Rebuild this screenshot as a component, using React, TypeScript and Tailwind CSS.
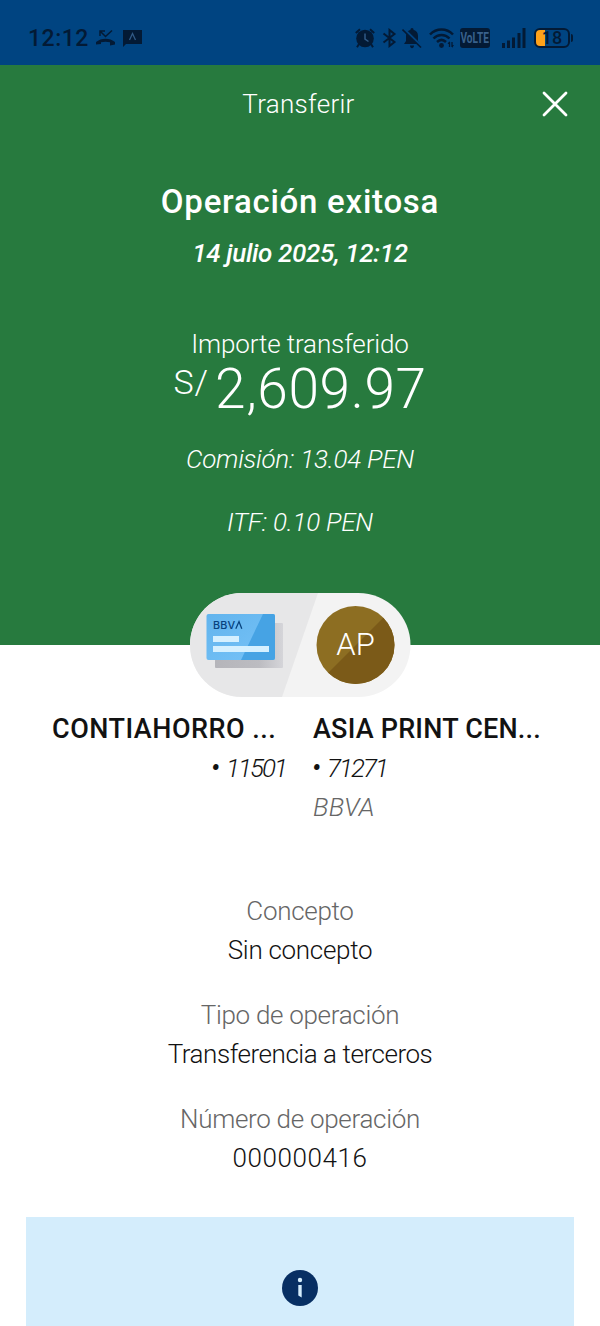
import type { ReactNode } from "react";

const details = [
  { label: "Concepto", value: "Sin concepto", valueClass: "tracking-[-0.3px]" },
  { label: "Tipo de operación", value: "Transferencia a terceros", valueClass: "tracking-[-0.45px]" },
  { label: "Número de operación", value: "000000416", valueClass: "tracking-[0.6px]" },
];

const StatusBar = () => (
  <div className="flex h-[65px] items-center bg-[#004481] px-7 pt-[11px] text-[#031a35]">
    <span className="w-[62px] whitespace-nowrap text-[23px] font-medium leading-none tracking-[0.5px]">12:12</span>
    {/* Missed call */}
    <svg className="ml-1.5 h-5 w-5" viewBox="0 0 20 20" fill="none" stroke="currentColor">
      <path d="M4 8V3H9M4 3L9.500 8.500L16 2.500" strokeWidth="1.500" />
      <path d="M0 16.500V14C5 9.500 14 9.500 19 14V16.500L14 17.500V14.300C11 13.400 8 13.400 5 14.300V16Z" fill="currentColor" stroke="none" />
    </svg>
    {/* Message */}
    <svg className="ml-[7px] h-5 w-[19px]" viewBox="0 0 19 20">
      <path d="M0 2H19V16H3L0 19Z" fill="currentColor" />
      <path d="M6.500 12L9.500 5.500L12.500 12" fill="none" stroke="#315a86" strokeWidth="1.300" />
    </svg>
    <div className="ml-auto flex items-center">
      {/* Alarm */}
      <svg className="h-5 w-5" viewBox="0 0 20 20" fill="none" stroke="currentColor">
        <circle cx="10" cy="10.500" r="8.800" fill="currentColor" stroke="none" />
        <path d="M.8 5L5 1.200M15 1.200L19.200 5M4 16L2 19.200M16 16L18 19.200" strokeWidth="2" />
        <path d="M10 5.500V11L13.500 13.500" stroke="#315a86" strokeWidth="1.500" />
      </svg>
      {/* Bluetooth */}
      <svg className="ml-[7px] h-5 w-[15px]" viewBox="0 0 15 20" fill="none" stroke="currentColor" strokeWidth="2">
        <path d="M1.500 5.500L12.500 14L7.500 18V2L12.500 6L1.500 14.500" />
      </svg>
      {/* Muted bell */}
      <svg className="ml-[5px] h-[21px] w-5" viewBox="0 0 20 21">
        <path d="M10 0C11 0 11.500 .8 11.500 1.800C14.500 2.600 16 5 16 8V13L18 16H2L4 13V8C4 5 5.500 2.600 8.500 1.800C8.500 .8 9 0 10 0ZM8 17.500H12C12 21 8 21 8 17.500Z" fill="currentColor" />
        <path d="M1.500 1L20 19" stroke="#004481" strokeWidth="3" />
        <path d="M.5 1.500L19 19.500" stroke="currentColor" strokeWidth="1.600" />
      </svg>
      {/* Wifi */}
      <svg className="ml-[7px] h-5 w-[26px]" viewBox="0 0 26 20" fill="none" stroke="currentColor" strokeWidth="2.500">
        <path d="M1 6.500C7.500 -.2 17.500 -.2 24 6.500M4.500 10.500C9 5.800 16 5.800 20.500 10.500M8 14C11 11.200 14 11.200 17 14" />
        <circle cx="12.500" cy="17.500" r="2.400" fill="currentColor" stroke="none" />
        <path d="M20.500 19V14M23 14V19" strokeWidth="1.300" />
        <path d="M18.500 16L20.500 13V16ZM25 17L23 20V17Z" fill="currentColor" stroke="none" />
      </svg>
      <span className="ml-[5px] flex h-5 w-[30px] items-center justify-center rounded-[3px] bg-[#031a35]">
        <span className="scale-x-[0.72] text-[14px] font-bold leading-none text-[#39618c]">VoLTE</span>
      </span>
      {/* Signal */}
      <svg className="ml-3 h-5 w-6" viewBox="0 0 24 20" fill="currentColor">
        <path d="M0 15h3v5h-3zM5 12.500h3v7.500h-3zM10 9.500h3v10.500h-3zM15.500 5h3v15h-3zM20.500 0h3v20h-3z" />
      </svg>
      {/* Battery */}
      <span className="ml-2 flex h-5 w-9 items-center justify-center rounded-[6px] border-2 border-current bg-[linear-gradient(90deg,#ffa21a_9px,transparent_9px)]">
        <span className="text-[18px] font-medium leading-none">18</span>
      </span>
      <span className="ml-px mr-[-1px] h-2 w-0.5 rounded-r bg-current" />
    </div>
  </div>
);

const Header = () => (
  <div className="grid h-[78px] grid-cols-[1fr_auto_1fr] items-center">
    <h1 className="col-start-2 pr-[3px] text-[26px] font-light tracking-[0.3px]">Transferir</h1>
    <button className="mr-8 justify-self-end" aria-label="Cerrar">
      <svg className="h-[26px] w-[26px]" viewBox="0 0 26 26" stroke="currentColor" strokeWidth="2.800" strokeLinecap="round">
        <path d="M2 2L24 24M24 2L2 24" />
      </svg>
    </button>
  </div>
);

const AccountBadge = () => (
  <svg className="h-[104px] w-[221px]" viewBox="0 0 221 104">
    <defs>
      <clipPath id="pill"><rect width="220.500" height="104" rx="52" /></clipPath>
      <clipPath id="card"><rect x="16.500" y="21" width="68.500" height="46" rx="2" /></clipPath>
      <clipPath id="avatar"><circle cx="165.500" cy="52" r="39" /></clipPath>
      <linearGradient id="cardFill" x1="0" y1="0" x2="1" y2="1">
        <stop offset="0" stopColor="#62b4ed" />
        <stop offset="1" stopColor="#77c3f8" />
      </linearGradient>
      <linearGradient id="shadow" x1="0" y1="0" x2="1" y2="0">
        <stop offset="0" stopColor="#b5b5ba" />
        <stop offset=".65" stopColor="#bcbcc1" />
        <stop offset="1" stopColor="#d5d5d9" />
      </linearGradient>
    </defs>
    <g clipPath="url(#pill)">
      <rect width="221" height="104" fill="#f3f3f3" />
      <path d="M0 0H128L92 104H0Z" fill="#e7e7e8" />
    </g>
    <rect x="25" y="30" width="68" height="45" rx="1" fill="url(#shadow)" />
    <g clipPath="url(#card)">
      <rect x="16" y="21" width="69" height="46" fill="url(#cardFill)" />
      <path d="M73 21H85V67H51Z" fill="#46a3e4" />
    </g>
    <path d="M23 43h26v6h-26zM23 53h56v6h-56z" fill="#d5f0ff" />
    <text x="23" y="35.800" fontSize="10.800" fontWeight="500" letterSpacing=".1" fill="#07427e" fontFamily="Inter, sans-serif">BBV</text>
    <path d="M45.800 35.800L49 28.600L51.800 35.800" fill="none" stroke="#07427e" strokeWidth="1.300" />
    <g clipPath="url(#avatar)">
      <rect x="126" y="13" width="80" height="78" fill="#8d6e22" />
      <path d="M193 25L138 80V92H206V25Z" fill="#7b5a18" />
    </g>
    <text x="165.500" y="62" textAnchor="middle" fontSize="31" fontWeight="300" fill="white">AP</text>
  </svg>
);

const Line = ({ className, children }: { className: string; children: ReactNode }) => (
  <p className={`whitespace-nowrap leading-[39px] ${className}`}>{children}</p>
);

const AccountNumber = ({ className = "", children }: { className?: string; children: ReactNode }) => (
  <Line className={`flex text-[26px] font-light italic ${className}`}>
    <span className="ml-[-1px] w-[15px] font-medium">•</span>
    <span className="tracking-[-2px]">{children}</span>
  </Line>
);

export default function App() {
  return (
    <main className="flex h-[1326px] w-[600px] flex-col overflow-hidden bg-white font-['Roboto','Liberation_Sans',sans-serif] text-[#121212]">
      <StatusBar />
      <section className="flex h-[580px] shrink-0 flex-col bg-[#277a3e] text-center text-white">
        <Header />
        <h2 className="mt-[36px] text-[33px] font-medium leading-[46px] tracking-[0.75px]">Operación exitosa</h2>
        <Line className="mt-[9px] text-[26px] font-medium italic tracking-[-0.35px]">14 julio 2025, 12:12</Line>
        <Line className="mt-[52px] text-[26px] font-light tracking-[-0.12px]">Importe transferido</Line>
        <div className="flex h-[60px] items-start justify-center font-light">
          <span className="mr-1.5 text-[34px] leading-[37px] tracking-[1px]">S/</span>
          <span className="text-[55px] leading-[50px] tracking-[0.6px]">2,609.97</span>
        </div>
        <Line className="mt-[16px] text-[26px] font-light italic tracking-[-0.25px]">Comisión: 13.04 PEN</Line>
        <Line className="mt-[24px] text-[26px] font-light italic tracking-[-0.25px]">ITF: 0.10 PEN</Line>
      </section>
      <div className="mt-[-52px] flex justify-center">
        <AccountBadge />
      </div>
      <section className="mt-[13px] grid grid-cols-2 gap-x-[25px] pl-[52px] pr-[51px]">
        <div className="flex flex-col">
          <Line className="text-[27px] font-medium tracking-[0.5px]">CONTIAHORRO ...</Line>
          <AccountNumber className="mr-0.5 self-end">11501</AccountNumber>
        </div>
        <div>
          <Line className="text-[27px] font-medium tracking-[0.2px]">ASIA PRINT CEN...</Line>
          <AccountNumber>71271</AccountNumber>
          <Line className="text-[26px] font-light italic tracking-[0.2px] text-[#666]">BBVA</Line>
        </div>
      </section>
      <section className="mt-[65px] flex flex-col gap-[26px] text-center text-[26px] font-light">
        {details.map((item) => (
          <div key={item.label}>
            <Line className="tracking-[-0.3px] text-[#666]">{item.label}</Line>
            <Line className={item.valueClass}>{item.value}</Line>
          </div>
        ))}
      </section>
      {/* Notice */}
      <section className="mx-[26px] mt-[39px] flex flex-1 justify-center bg-[#d4edfc] pt-[53px]">
        <svg className="h-9 w-9" viewBox="0 0 36 36">
          <circle cx="18" cy="18" r="18" fill="#072f63" />
          <circle cx="18" cy="10" r="2.200" fill="#d4edfc" />
          <path d="M16.300 15H19.700V27.500L16.300 25.500Z" fill="#d4edfc" />
        </svg>
      </section>
    </main>
  );
}
